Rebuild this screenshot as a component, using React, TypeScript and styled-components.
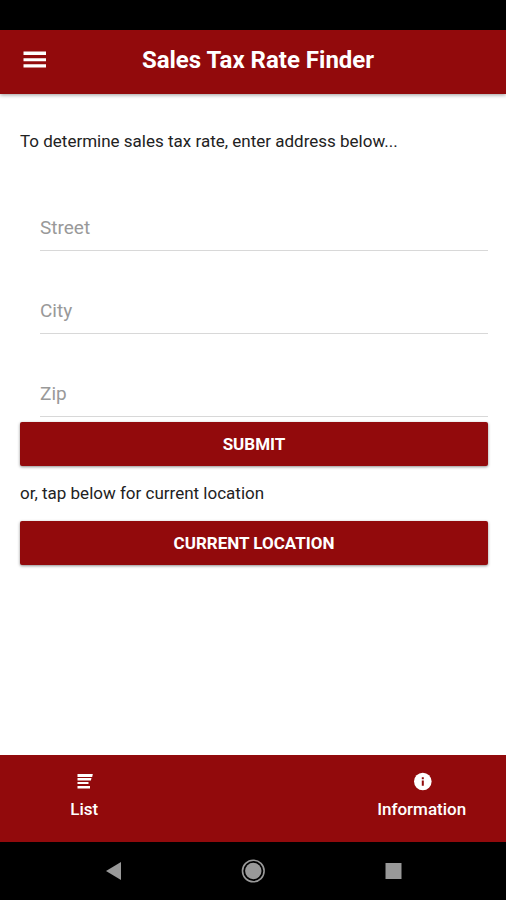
import React from "react";
import styled, { createGlobalStyle } from "styled-components";

const GlobalStyle = createGlobalStyle`
  * { box-sizing: border-box; }
  body { margin: 0; background: #fff; font-family: Roboto, "Liberation Sans", sans-serif; }
`;

const Screen = styled.div`
  min-height: 100vh;
  display: flex;
  flex-direction: column;
  color: #222;
`;

const StatusBar = styled.div`
  height: 30px;
  background: #000;
`;

const Header = styled.header`
  height: 64px;
  padding: 0 20px 4px;
  display: grid;
  grid-template-columns: 30px 1fr 20px;
  align-items: center;
  background: #920a0c;
  color: #fff;
  box-shadow: 0 1px 4px rgba(0, 0, 0, 0.4);
`;

const MenuButton = styled.button`
  display: flex;
  padding: 0;
  border: 0;
  background: none;
  color: inherit;
`;

const Title = styled.h1`
  margin: 0;
  font-size: 24px;
  line-height: 28px;
  font-weight: 700;
  text-align: center;
`;

const Content = styled.main`
  flex: 1;
  padding: 35px 18px 0 20px;
`;

const Note = styled.p`
  margin: 0;
  font-size: 17px;
  line-height: 24px;
`;

const Form = styled.form`
  padding-top: 54px;
`;

const Field = styled.input`
  display: block;
  width: calc(100% - 20px);
  height: 44px;
  margin: 0 0 39px 20px;
  padding: 0 0 2px;
  border: 0;
  border-bottom: 1px solid #d8d8d8;
  border-radius: 0;
  outline: none;
  background: none;
  font: 400 19px/24px Roboto, "Liberation Sans", sans-serif;
  color: #222;

  &::placeholder { color: #999; opacity: 1; }
  &:last-of-type { margin-bottom: 5px; }
`;

const ActionButton = styled.button`
  display: block;
  width: 100%;
  height: 44px;
  padding: 0;
  border: 0;
  border-radius: 2px;
  background: #920a0c;
  color: #fff;
  box-shadow: 0 1px 3px rgba(0, 0, 0, 0.45);
  font: 700 17px/24px Roboto, "Liberation Sans", sans-serif;
  text-transform: uppercase;
`;

const Location = styled.section`
  display: flex;
  flex-direction: column;
  gap: 16px;
  padding-top: 15px;
`;

const Tabs = styled.nav`
  height: 87px;
  display: grid;
  grid-template-columns: repeat(3, 1fr);
  background: #920a0c;
`;

const Tab = styled.a<{ $column: number }>`
  grid-column: ${(p) => p.$column};
  display: flex;
  flex-direction: column;
  align-items: center;
  gap: 6px;
  padding-top: 16px;
  color: #fff;
  text-decoration: none;
  font-size: 17px;
  font-weight: 500;
  line-height: 24px;
`;

const SystemBar = styled.div`
  height: 58px;
  padding: 0 43px;
  display: grid;
  grid-template-columns: repeat(3, 1fr);
  align-items: center;
  justify-items: center;
  background: #000;
`;

const SystemButton = styled.button`
  display: flex;
  padding: 0;
  border: 0;
  background: none;
`;

export default function App() {
  return (
    <>
      <GlobalStyle />
      <Screen>
        <StatusBar />
        <Header>
          <MenuButton type="button" aria-label="Menu">
            <svg width="30" height="30" viewBox="0 0 30 30" fill="currentColor">
              <path d="M3.5 6.5H26V10H3.5zM3.5 13.2H26v3H3.5zM3.5 19.2H26v3.3H3.5z" />
            </svg>
          </MenuButton>
          <Title>Sales Tax Rate Finder</Title>
        </Header>
        <Content>
          <Note>To determine sales tax rate, enter address below...</Note>
          <Form onSubmit={(e) => e.preventDefault()}>
            <Field aria-label="Street" placeholder="Street" />
            <Field aria-label="City" placeholder="City" />
            <Field aria-label="Zip" placeholder="Zip" />
            <ActionButton type="submit">Submit</ActionButton>
          </Form>
          <Location>
            <Note>or, tap below for current location</Note>
            <ActionButton type="button">Current Location</ActionButton>
          </Location>
        </Content>
        <Tabs>
          <Tab href="#list" $column={1}>
            <svg width="20" height="20" viewBox="0 0 20 20" fill="currentColor">
              <path d="M3.5 3h15.3l-.6 3H3.5zM3.5 7h14l-.6 2.500H3.500zM3.5 11h11v2H3.500zM3.5 15h12.500v2.500H3.500z" />
            </svg>
            List
          </Tab>
          <Tab href="#information" $column={3}>
            <svg width="20" height="20" viewBox="0 0 20 20">
              <circle cx="10.8" cy="10.5" r="8.8" fill="#fff" />
              <path d="M9.8 6.200h2v2h-2zM9.8 9.500h2v5.300h-2z" fill="#920a0c" />
            </svg>
            Information
          </Tab>
        </Tabs>
        <SystemBar>
          <SystemButton type="button" aria-label="Back">
            <svg width="24" height="24" viewBox="0 0 24 24"><path d="M20 3v18L5 12z" fill="#999" /></svg>
          </SystemButton>
          <SystemButton type="button" aria-label="Home">
            <svg width="24" height="24" viewBox="0 0 24 24">
              <circle cx="12.3" cy="12" r="10.8" fill="none" stroke="#999" strokeWidth="1.6" />
              <circle cx="12.3" cy="12" r="8.2" fill="#999" />
            </svg>
          </SystemButton>
          <SystemButton type="button" aria-label="Recent apps">
            <svg width="24" height="24" viewBox="0 0 24 24"><path d="M4.500 4h16v16h-16z" fill="#999" /></svg>
          </SystemButton>
        </SystemBar>
      </Screen>
    </>
  );
}
